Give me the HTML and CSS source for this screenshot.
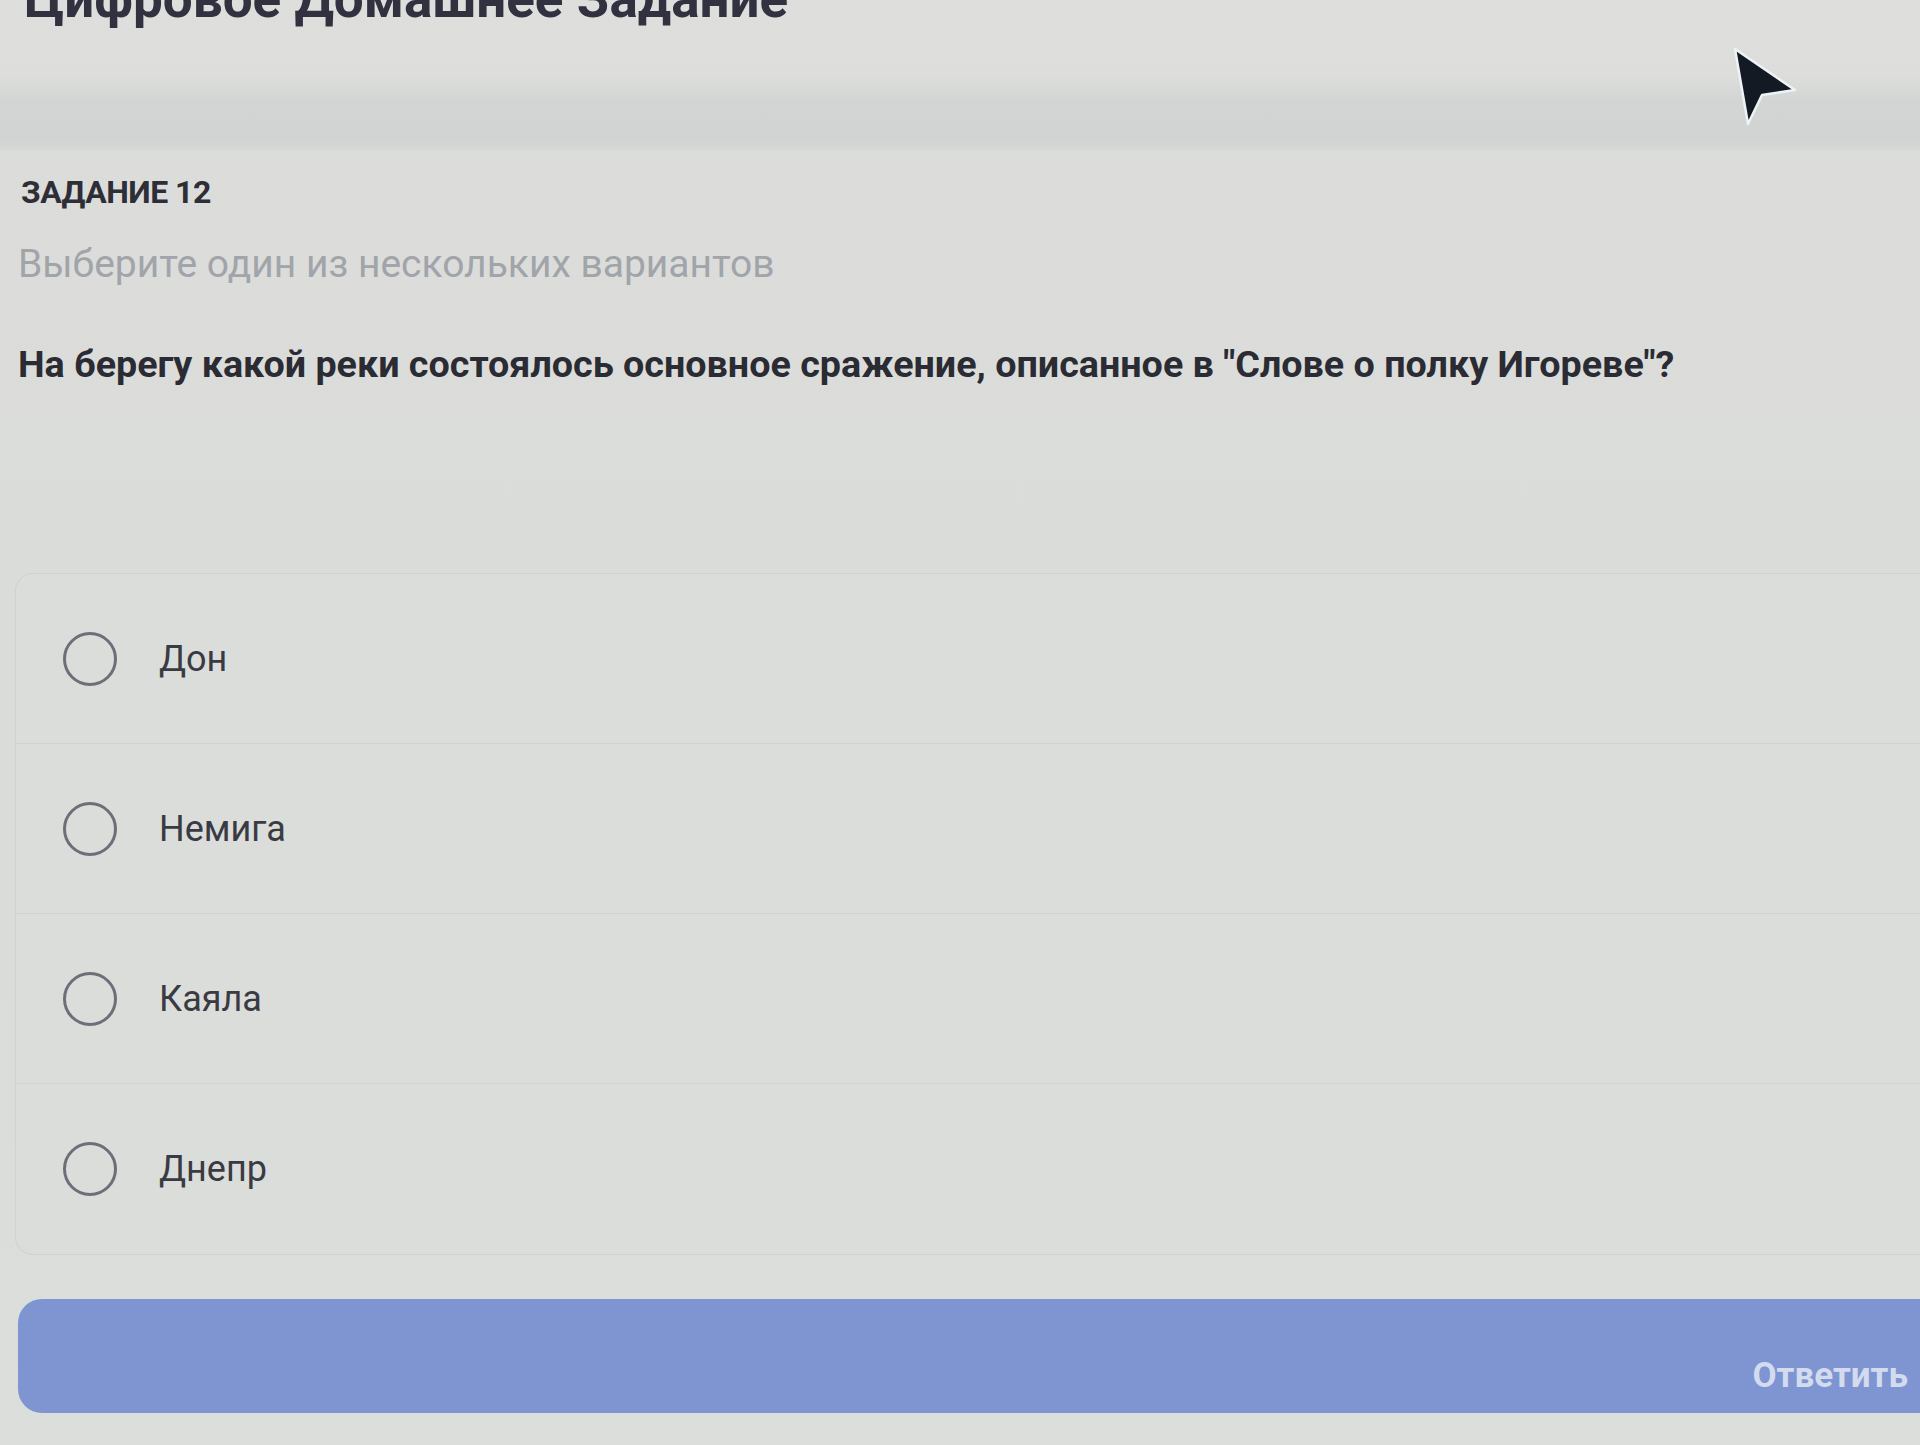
FILE: index.html
```html
<!DOCTYPE html>
<html lang="ru">
<head>
<meta charset="utf-8">
<title>Цифровое Домашнее Задание</title>
<link rel="stylesheet" href="styles.css">
</head>
<body>
<div class="page">
  <header class="header">
    <h1 class="title">Цифровое Домашнее Задание</h1>
  </header>
  <main class="content">
    <div class="task-label">ЗАДАНИЕ 12</div>
    <div class="task-hint">Выберите один из нескольких вариантов</div>
    <div class="task-question">На берегу какой реки состоялось основное сражение, описанное в "Слове о полку Игореве"?</div>
    <div class="options">
      <label class="option"><span class="radio"></span><span class="option-text">Дон</span></label>
      <label class="option"><span class="radio"></span><span class="option-text">Немига</span></label>
      <label class="option"><span class="radio"></span><span class="option-text">Каяла</span></label>
      <label class="option"><span class="radio"></span><span class="option-text">Днепр</span></label>
    </div>
    <button class="submit">Ответить</button>
  </main>
  <svg class="cursor" width="68" height="84" viewBox="0 0 68 84">
    <polygon points="4,3 17,78 31,49 64,44" fill="#141a24" stroke="#eef3f6" stroke-width="2.5" stroke-linejoin="round"/>
  </svg>
</div>
</body>
</html>
```
FILE: styles.css
```css
html, body {
  margin: 0;
  padding: 0;
  width: 1920px;
  height: 1445px;
  overflow: hidden;
  background: #d9dbd9;
  font-family: Roboto, "Liberation Sans", Arial, sans-serif;
  color: #2b2c34;
}

.page {
  position: relative;
  width: 1920px;
  height: 1445px;
  display: flex;
  flex-direction: column;
  background: linear-gradient(180deg, #dcdddb 0%, #dadcda 60%, #dcdedc 100%);
}

.header {
  height: 150px;
  flex: none;
  background: linear-gradient(180deg, #dedfdd 0px, #dddedc 75px, #d3d5d4 100px, #d2d4d3 140px, #d9dbd9 158px);
}

.title {
  margin: -27px 0 0 24px;
  font-size: 53px;
  line-height: 1;
  font-weight: 700;
  color: #31313f;
  white-space: nowrap;
}

.content {
  display: flex;
  flex-direction: column;
  padding: 0 0 0 18px;
}

.task-label {
  margin-top: 26px;
  margin-left: 3px;
  font-size: 32px;
  line-height: 32px;
  font-weight: 700;
  color: #2d2e36;
  letter-spacing: -0.5px;
}

.task-hint {
  margin-top: 34px;
  font-size: 39px;
  line-height: 44px;
  color: #a1a4a9;
}

.task-question {
  margin-top: 56px;
  font-size: 37.7px;
  line-height: 44px;
  font-weight: 700;
  color: #2a2b33;
  white-space: nowrap;
}

.options {
  margin-top: 187px;
  margin-left: -3px;
  border: 1.5px solid #d0d2d0;
  border-right: none;
  border-radius: 18px 0 0 18px;
  background: #dbdddb;
  display: flex;
  flex-direction: column;
}

.option {
  height: 170px;
  display: flex;
  align-items: center;
  gap: 42px;
  padding-left: 47px;
  border-bottom: 1.5px solid #d0d2d0;
  box-sizing: border-box;
}

.option:last-child {
  border-bottom: none;
}

.radio {
  width: 48px;
  height: 48px;
  border: 3.5px solid #6c6e78;
  border-radius: 50%;
  flex: none;
}

.option-text {
  font-size: 36px;
  line-height: 40px;
  color: #3a3b42;
}

.submit {
  margin-top: 44px;
  margin-left: 0;
  height: 114px;
  border: none;
  border-radius: 24px 0 0 24px;
  background: #7e95d1;
  color: #d3dbef;
  font-family: Roboto, "Liberation Sans", Arial, sans-serif;
  font-size: 35px;
  font-weight: 700;
  text-align: right;
  padding: 38px 12px 0 0;
}

.cursor {
  position: absolute;
  left: 1731px;
  top: 46px;
}
```
